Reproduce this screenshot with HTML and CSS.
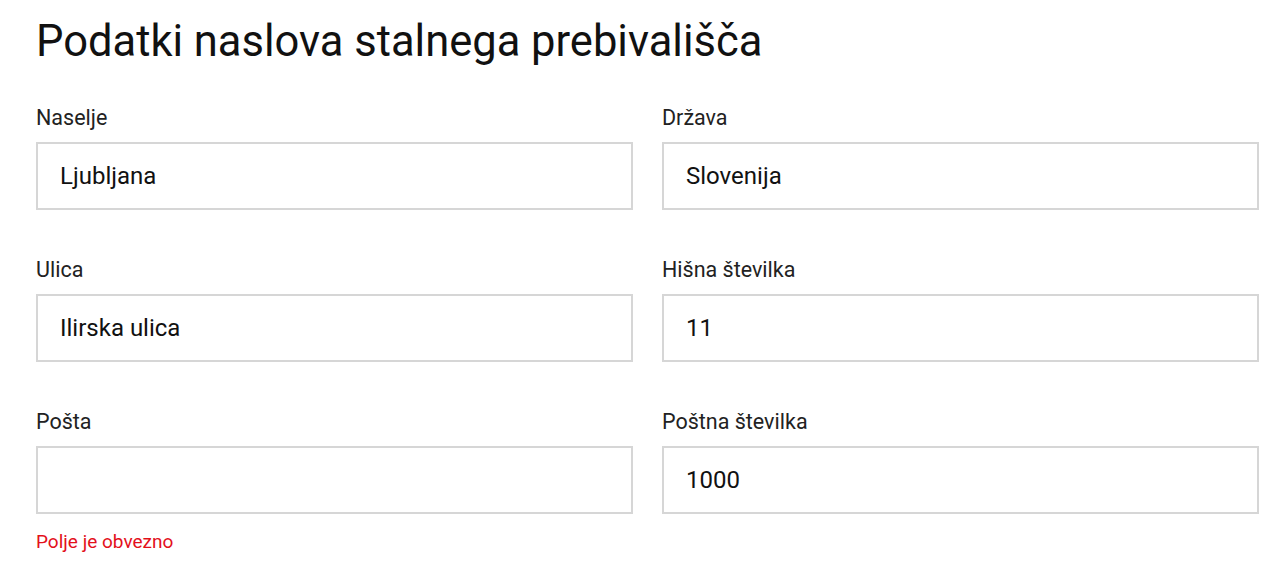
FILE: index.html
```html
<!DOCTYPE html>
<html lang="sl">
<head>
<meta charset="utf-8">
<link rel="stylesheet" href="styles.css">
</head>
<body>
<main class="page">
  <h1 class="title">Podatki naslova stalnega prebivališča</h1>
  <form class="grid">
    <div class="field">
      <label class="label">Naselje</label>
      <div class="input">Ljubljana</div>
    </div>
    <div class="field">
      <label class="label">Država</label>
      <div class="input">Slovenija</div>
    </div>
    <div class="field">
      <label class="label">Ulica</label>
      <div class="input">Ilirska ulica</div>
    </div>
    <div class="field">
      <label class="label">Hišna številka</label>
      <div class="input">11</div>
    </div>
    <div class="field">
      <label class="label">Pošta</label>
      <div class="input"></div>
      <div class="error">Polje je obvezno</div>
    </div>
    <div class="field">
      <label class="label">Poštna številka</label>
      <div class="input">1000</div>
    </div>
  </form>
</main>
</body>
</html>
```
FILE: styles.css
```css
html, body {
  margin: 0;
  padding: 0;
  background: #ffffff;
}
body {
  font-family: Roboto, "Liberation Sans", sans-serif;
  color: #1a1a1a;
}
.page {
  padding: 0 21px 0 36px;
}
.title {
  margin: 0;
  padding-top: 17px;
  font-size: 43.5px;
  font-weight: 400;
  line-height: 50px;
  color: #111;
}
.grid {
  margin-top: 39px;
  display: grid;
  grid-template-columns: 1fr 1fr;
  column-gap: 29px;
  row-gap: 48px;
  align-items: start;
}
.field {
  display: flex;
  flex-direction: column;
}
.label {
  font-size: 21.5px;
  line-height: 24px;
  color: #222;
  margin-bottom: 12px;
}
.input {
  box-sizing: border-box;
  height: 68px;
  border: 2px solid #d6d6d6;
  padding: 0 22px;
  display: flex;
  align-items: center;
  font-size: 24px;
  color: #111;
}
.error {
  margin-top: 17px;
  font-size: 19px;
  line-height: 22px;
  color: #e3101b;
}
```
